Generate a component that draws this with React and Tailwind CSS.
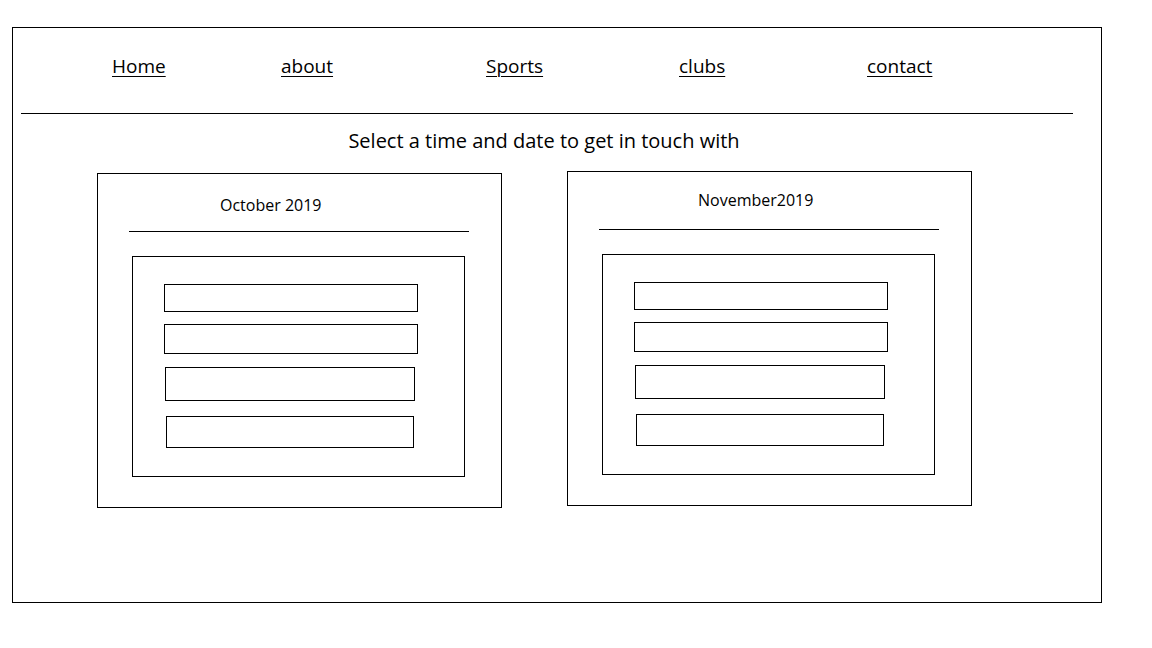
import React from "react";

const navItems = [
  { label: "Home", w: "w-[169px]" },
  { label: "about", w: "w-[205px]" },
  { label: "Sports", w: "w-[193px]" },
  { label: "clubs", w: "w-[188px]" },
  { label: "contact", w: "w-[120px]" },
];

function Rows() {
  return (
    <div className="ml-[34px] mt-[24px] flex h-[221px] w-[333px] flex-col border border-black">
      <div className="ml-[31px] mt-[27px] h-[28px] w-[254px] border border-black" />
      <div className="ml-[31px] mt-[12px] h-[30px] w-[254px] border border-black" />
      <div className="ml-[32px] mt-[13px] h-[34px] w-[250px] border border-black" />
      <div className="ml-[33px] mt-[15px] h-[32px] w-[248px] border border-black" />
    </div>
  );
}

function Card({ title, titleCls, cardCls }) {
  return (
    <div className={"flex h-[335px] w-[405px] flex-col border border-black " + cardCls}>
      <div className="h-[57px]">
        <div className={"text-[16px] leading-[20px] text-black " + titleCls}>{title}</div>
      </div>
      <div className="ml-[31px] h-px w-[340px] bg-black" />
      <Rows />
    </div>
  );
}

export default function App() {
  return (
    <div
      className="h-[648px] w-[1152px] bg-white pl-[12px] pt-[27px]"
      style={{ fontFamily: '"Open Sans", "Noto Sans", sans-serif' }}
    >
      <div className="flex h-[576px] w-[1090px] flex-col border border-black">
        <nav className="flex h-[85px] pl-[99px] pt-[26px]">
          {navItems.map((n) => (
            <div key={n.label} className={n.w}>
              <a className="text-[19px] leading-[24px] text-black underline underline-offset-[3px] decoration-1">
                {n.label}
              </a>
            </div>
          ))}
        </nav>
        <div className="ml-[8px] h-px w-[1052px] bg-black" />
        <div className="ml-[335px] mt-[15px] w-[392px] whitespace-nowrap text-center text-[20px] leading-[24px] text-black">
          Select a time and date to get in touch with
        </div>
        <div className="mt-[18px] flex items-start pl-[84px]">
          <Card title="October 2019" titleCls="pl-[122px] pt-[21px]" cardCls="mt-[2px]" />
          <Card title="November2019" titleCls="pl-[130px] pt-[18px]" cardCls="ml-[65px]" />
        </div>
      </div>
    </div>
  );
}
